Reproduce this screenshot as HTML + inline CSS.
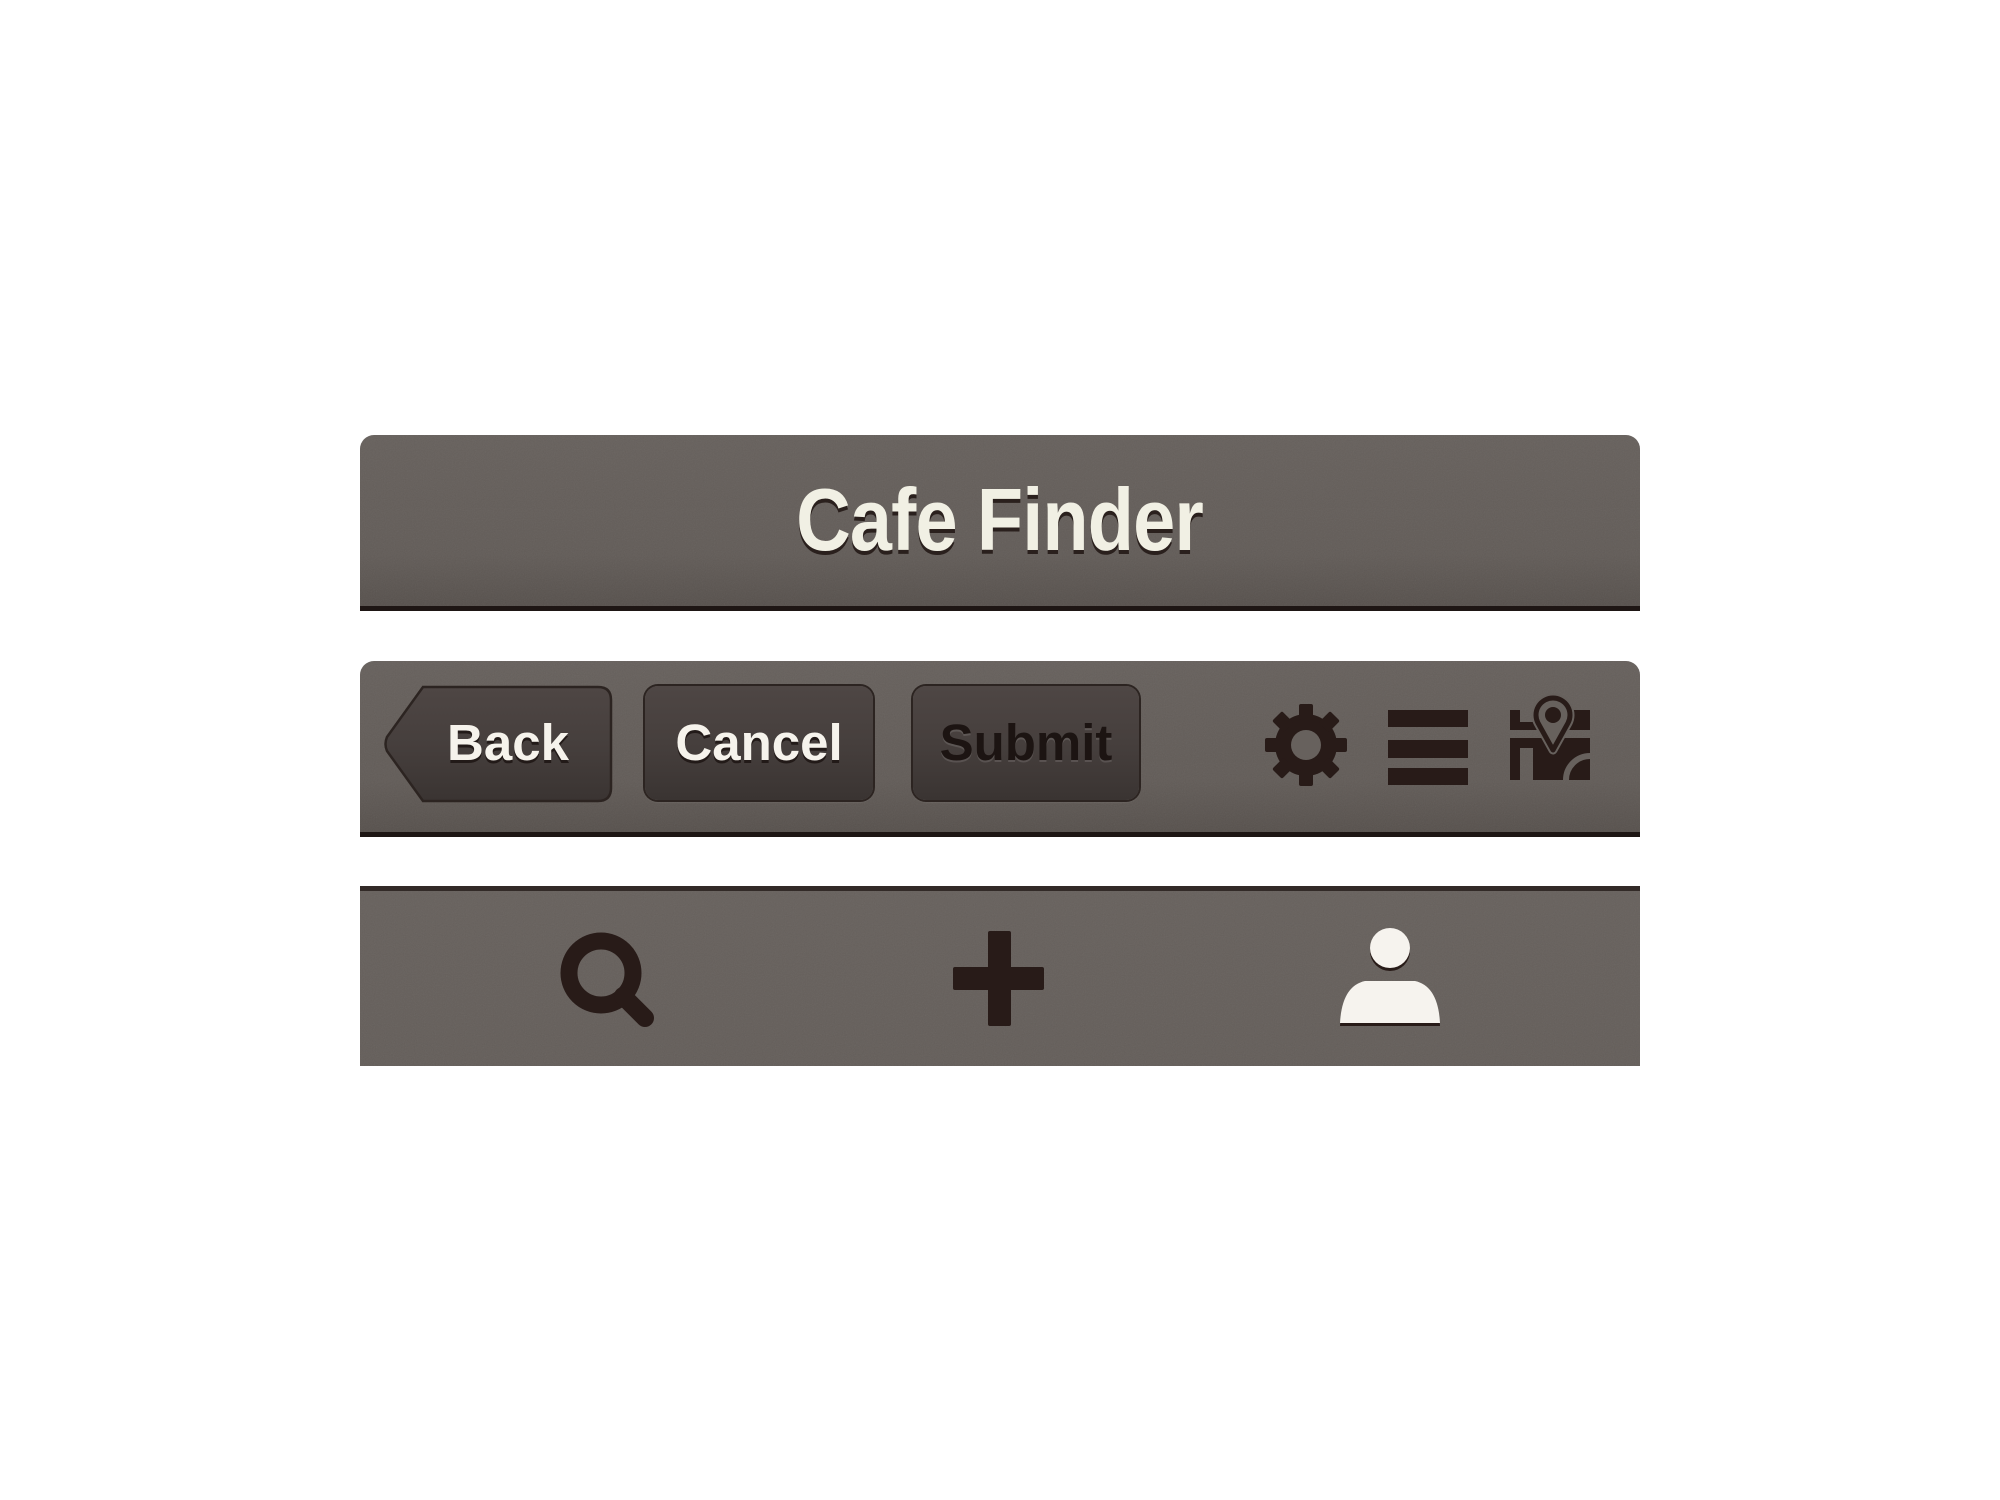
<!DOCTYPE html>
<html><head><style>
html,body{margin:0;padding:0;background:#fff;width:2000px;height:1500px;overflow:hidden}
.bar{position:absolute;left:360px;width:1280px;background:linear-gradient(#67615d,#625c58 70%,#57514d);overflow:hidden}
.b1{top:435px;height:171px;border-radius:14px 14px 0 0;border-bottom:5px solid #1e1614}
.b2{top:661px;height:171px;border-radius:14px 14px 0 0;border-bottom:5px solid #1e1614}
.b3{top:886px;height:175px;border-top:5px solid #322a27;background:linear-gradient(#67615d,#645e5a)}
.noise{position:absolute;left:0;top:0;width:1280px;height:180px;opacity:.08}
.title{position:absolute;left:0;width:1280px;top:34px;text-align:center;font:bold 88px "Liberation Sans Narrow","Liberation Sans",sans-serif;color:#f1f0e4;text-shadow:0 4px 0 #2a201d;letter-spacing:-1px}
.btn{position:absolute;top:25px;height:114px;border-radius:13px;background:linear-gradient(#4e4644,#463f3d 50%,#3a3432);box-shadow:0 0 0 2px #2c2421,0 2px 2px rgba(255,255,255,.15);font:bold 51px "Liberation Sans",sans-serif;color:#f6f3ec;text-align:center;line-height:114px;text-shadow:0 3px 0 #221a18}
</style></head><body>
<svg width="0" height="0" style="position:absolute"><filter id="n"><feTurbulence type="fractalNoise" baseFrequency="0.9" numOctaves="2"/><feColorMatrix type="saturate" values="0"/></filter></svg>
<div class="bar b1"><svg class="noise"><rect width="1280" height="180" filter="url(#n)"/></svg><div class="title"><span style="display:inline-block;transform:scaleX(.86)">Cafe Finder</span></div></div>
<div class="bar b2"><svg class="noise"><rect width="1280" height="180" filter="url(#n)"/></svg>
<svg style="position:absolute;left:23px;top:24px" width="230" height="118" viewBox="0 0 230 118">
<defs><linearGradient id="g" x1="0" y1="0" x2="0" y2="1"><stop offset="0" stop-color="#4e4644"/><stop offset=".5" stop-color="#463f3d"/><stop offset="1" stop-color="#3a3432"/></linearGradient></defs>
<path d="M40 2 H215 Q228 2 228 15 V103 Q228 116 215 116 H40 L4 66 Q1 59 4 52 Z" fill="url(#g)" stroke="#2c2421" stroke-width="2.5"/>
</svg>
<div class="btn" style="left:50px;width:196px;background:none;box-shadow:none">Back</div>
<div class="btn" style="left:285px;width:228px">Cancel</div>
<div class="btn" style="left:553px;width:226px;color:#1c1412;text-shadow:0 2px 0 rgba(255,255,255,.12)">Submit</div>
<svg style="position:absolute;left:0;top:0" width="1280" height="171">
<g fill="#281b18">
<g transform="translate(946,84)">
<circle r="31"/>
<g id="tt"><rect x="-7" y="-41" width="14" height="16" rx="2"/></g>
<use href="#tt" transform="rotate(45)"/><use href="#tt" transform="rotate(90)"/><use href="#tt" transform="rotate(135)"/><use href="#tt" transform="rotate(180)"/><use href="#tt" transform="rotate(225)"/><use href="#tt" transform="rotate(270)"/><use href="#tt" transform="rotate(315)"/>
<circle r="15" fill="#67615d"/>
</g>
<rect x="1028" y="49" width="80" height="17"/><rect x="1028" y="79" width="80" height="18"/><rect x="1028" y="107" width="80" height="17"/>
<rect x="1150" y="49" width="10" height="20"/>
<rect x="1160" y="61" width="17" height="8"/>
<rect x="1200" y="49" width="30" height="20"/>
<rect x="1150" y="77" width="80" height="10"/>
<rect x="1150" y="87" width="10" height="32"/>
<rect x="1173" y="87" width="57" height="32"/>
<path d="M1206 119 A24 24 0 0 1 1230 95" fill="none" stroke="#67615d" stroke-width="6"/>
<path d="M1193 89 L1178 62 A17 17 0 1 1 1208 62 Z" fill="#67615d" stroke="#67615d" stroke-width="9" stroke-linejoin="round"/>
<path d="M1193 89 L1178 62 A17 17 0 1 1 1208 62 Z" fill="#67615d" stroke="#281b18" stroke-width="5" stroke-linejoin="round"/>
<circle cx="1193" cy="54" r="8"/>
</g></svg>
</div>
<div class="bar b3"><svg class="noise"><rect width="1280" height="180" filter="url(#n)"/></svg>
<svg width="1280" height="175" style="position:absolute;left:0;top:0">
<g fill="#281b18">
<circle cx="241" cy="82" r="32" fill="none" stroke="#281b18" stroke-width="17"/>
<path d="M263 105 L285 127" stroke="#281b18" stroke-width="18" stroke-linecap="round"/>
<rect x="628" y="40" width="23" height="95" rx="2"/>
<rect x="593" y="76" width="91" height="23" rx="2"/>
</g>
<g>
<circle cx="1030" cy="60" r="20" fill="#281b18"/>
<circle cx="1030" cy="57" r="20" fill="#f6f3ee"/>
<path d="M980 135 Q982 98 1005 93 H1055 Q1078 98 1080 135 Z" fill="#281b18"/>
<path d="M980 132 Q982 95 1005 90 H1055 Q1078 95 1080 132 Z" fill="#f6f3ee"/>
</g></svg>
</div>
</body></html>
